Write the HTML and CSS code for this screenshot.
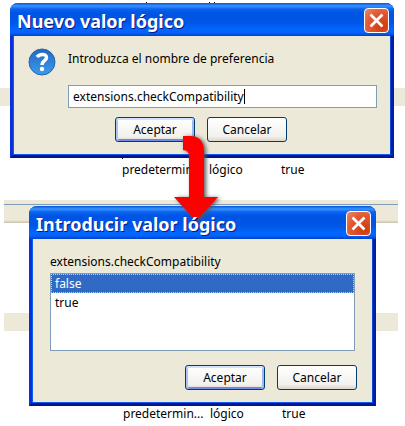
FILE: index.html
```html
<!DOCTYPE html>
<html lang="es">
<head>
  <meta charset="UTF-8" />
  <meta name="viewport" content="width=device-width, initial-scale=1.0"/>
  <title>Nuevo valor lógico</title>
  <link rel="stylesheet" href="styles.css">
</head>
<body>
  <main class="steps">
    <section class="step step-name">
      <form class="dialog">
        <header class="titlebar">
          <h2>Nuevo valor lógico</h2>
          <button type="button" class="close" aria-label="Cerrar">
            <svg viewBox="0 0 25 25"><path d="M6 6 L19 19 M19 6 L6 19"/></svg>
          </button>
        </header>
        <div class="content prompt">
          <svg class="question" viewBox="0 0 28 28">
            <defs>
              <linearGradient id="ball" x1="0" y1="0" x2="0" y2="1">
                <stop offset="0" stop-color="#2468c4"/>
                <stop offset="1" stop-color="#3b9bec"/>
              </linearGradient>
            </defs>
            <circle cx="14" cy="14" r="13" fill="url(#ball)" stroke="#2a62b4"/>
            <path d="M9 9 C11 6 18.500 5 18.500 9.500 C18.500 13 14 12.500 14 17" fill="none" stroke="#fff" stroke-width="3.500"/>
            <circle cx="14" cy="21" r="2.200" fill="#fff"/>
          </svg>
          <div class="field">
            <label for="pref">Introduzca el nombre de preferencia</label>
            <input type="text" id="pref" value="extensions.checkCompatibility" />
          </div>
        </div>
        <div class="buttons center">
          <button type="submit" class="btn default">Aceptar</button>
          <button type="button" class="btn">Cancelar</button>
        </div>
      </form>
      <div class="row">
        <span>predetermin...</span>
        <span>lógico</span>
        <span>true</span>
      </div>
      <svg class="arrow" viewBox="0 0 50 90">
        <path d="M10 2 H17 Q31 2 31 18 V63 H45 L23 87 L1 63 H16 V22 Q16 16 10 16 Z"/>
      </svg>
    </section>

    <section class="step step-value">
      <form class="dialog">
        <header class="titlebar">
          <h2>Introducir valor lógico</h2>
          <button type="button" class="close" aria-label="Cerrar">
            <svg viewBox="0 0 25 25"><path d="M6 6 L19 19 M19 6 L6 19"/></svg>
          </button>
        </header>
        <div class="content">
          <label for="value">extensions.checkCompatibility</label>
          <select id="value" size="4">
            <option selected>false</option>
            <option>true</option>
          </select>
        </div>
        <div class="buttons end">
          <button type="submit" class="btn default">Aceptar</button>
          <button type="button" class="btn">Cancelar</button>
        </div>
      </form>
      <div class="row">
        <span>predetermin...</span>
        <span>lógico</span>
        <span>true</span>
      </div>
    </section>
  </main>
</body>
</html>
```
FILE: styles.css
```css
* {
  box-sizing: border-box;
}

body {
  margin: 0;
  background: #fff;
  color: #000;
  font-family: 'Noto Sans', sans-serif;
  font-size: 12px;
  line-height: 16px;
}

.steps {
  overflow: hidden;
}

.step {
  position: relative;
}

.step-name {
  padding: 3px 11px 19px 10px;
  background:
    linear-gradient(#000, #000) 146px 2px / 1px 1px no-repeat,
    linear-gradient(#000, #000) 209px 2px / 1px 1px no-repeat,
    linear-gradient(#000, #000) 214px 2px / 1px 1px no-repeat,
    linear-gradient(#000, #000) 122px 158px / 1px 1px no-repeat,
    linear-gradient(#ece9d8, #ece9d8) 0 88px / 100% 18px no-repeat;
}

.step-value {
  margin: 0 7px 0 4px;
  padding: 6px 22px 0 25px;
  background:
    linear-gradient(#7f9db9, #7f9db9) 0 4px / 100% 1px no-repeat,
    linear-gradient(#ece9d8 20px, #d8d2bd 22px, #c4bda5 23px) 0 0 / 100% 23px no-repeat,
    linear-gradient(#ece9d8, #ece9d8) 0 113px / 100% 18px no-repeat;
}

.dialog {
  border: 3px solid;
  border-color: #0842d8 #001ea0 #001390 #0831d9;
  border-top: 0;
  border-radius: 8px 8px 0 0;
  background: #ece9d8;
  box-shadow: inset 1px -1px #0f5cec, inset -1px 0 #0a48d8;
}

.titlebar {
  display: flex;
  align-items: center;
  justify-content: space-between;
  height: 33px;
  margin: 0 -3px;
  padding: 2px 5px 0 7px;
  border-radius: 8px 8px 0 0;
  background: linear-gradient(#0855dd, #3a93ff 3px, #0a63ee 6px, #0054e3 10px, #0055e5 19px, #0266ff 27px, #0262fa 30px, #0040c8);
}

/* the title stays readable over the tip of the arrow */
.titlebar h2 {
  position: relative;
  z-index: 2;
  margin: 0;
  color: #fff;
  font-size: 18px;
  line-height: 24px;
  text-shadow: 1px 1px #0a1883;
}

.close {
  width: 25px;
  height: 25px;
  padding: 0;
  border: 1px solid #fff;
  border-radius: 4px;
  background: radial-gradient(circle at 75% 75%, #cf3a0c, #e35a35 60%, #ea8a6d);
}

.close svg {
  display: block;
  width: 23px;
  height: 23px;
}

.close path {
  fill: none;
  stroke: #fff;
  stroke-width: 3;
}

.content {
  padding: 13px 18px 0;
}

.prompt {
  display: flex;
  gap: 12px;
  padding: 12px 14px 0 15px;
}

.question {
  flex: none;
  width: 28px;
  height: 28px;
}

.field {
  flex: 1;
}

.field label,
.content > label {
  display: block;
  padding-top: 2px;
}

.field label {
  padding-top: 3px;
}

.field input {
  width: 100%;
  height: 23px;
  margin-top: 18px;
  padding: 0 4px;
  border: 1px solid #7f9db9;
  background: linear-gradient(#000, #000) 175px 3px / 1px 15px no-repeat #fff;
  color: #000;
  font: inherit;
}

.content select {
  display: block;
  width: 100%;
  height: 78px;
  margin-top: 3px;
  padding: 0;
  border: 1px solid #7f9db9;
  border-radius: 0;
  background: #fff;
  color: #000;
  font: inherit;
  overflow: hidden;
}

.content option {
  height: 19px;
  padding: 1px 4px;
  line-height: 17px;
}

.content option:checked {
  outline: 1px dotted #f5d34a;
  outline-offset: -1px;
  background: linear-gradient(#316ac5, #316ac5);
  color: #fff;
  -webkit-text-fill-color: #fff;
}

.buttons {
  display: flex;
  gap: 12px;
  padding: 9px 18px 13px 16px;
}

.center {
  justify-content: center;
}

.end {
  justify-content: flex-end;
  padding: 14px 16px 13px;
}

.btn {
  width: 80px;
  height: 25px;
  padding: 0;
  border: 1px solid #003c74;
  border-radius: 3px;
  background: linear-gradient(#fff, #f2f1ec 80%, #dcd6cb);
  color: #000;
  font: inherit;
}

.default {
  box-shadow: inset 0 2px #cee0fb, inset 2px 0 #a9c4f3, inset -2px 0 #a0b8ee, inset 0 -2px #6d8be6;
}

.row {
  display: grid;
  grid-template-columns: 87px 72px 1fr;
  padding: 4px 0 3px 112px;
}

.step-value .row {
  padding: 0 0 4px 94px;
}

.arrow {
  position: absolute;
  top: 134px;
  left: 173px;
  z-index: 1;
  width: 50px;
  height: 90px;
  overflow: visible;
  filter: drop-shadow(2px 1px 2px #555);
}

.arrow path {
  fill: #f00;
}
```
